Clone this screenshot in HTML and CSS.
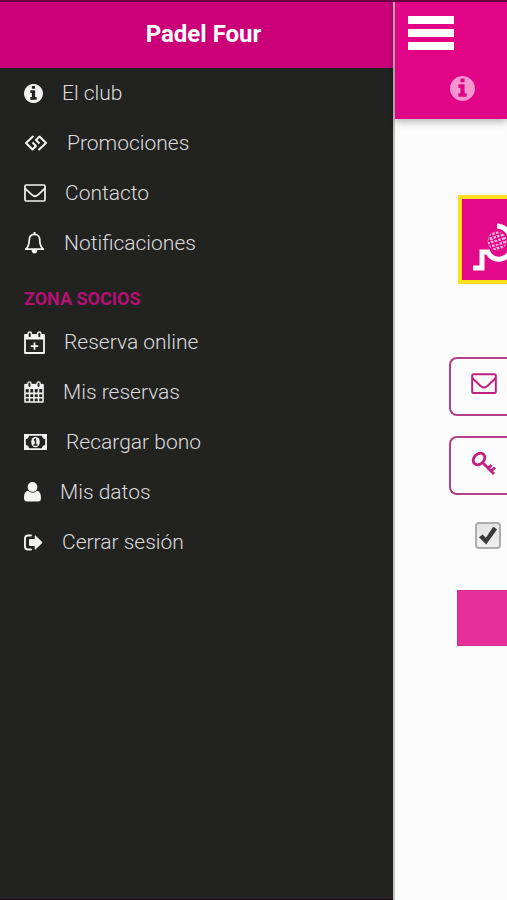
FILE: index.html
```
<!DOCTYPE html>
<html lang="es">
<head>
<meta charset="utf-8">
<meta name="viewport" content="width=device-width, initial-scale=1">
<title>Padel Four</title>
<link rel="stylesheet" href="styles.css">
</head>
<body>
<svg class="defs" aria-hidden="true">
  <symbol id="info" viewBox="128 128 1536 1536"><path fill="currentColor" d="M1152 1376v-160q0-14-9-23t-23-9h-96v-512q0-14-9-23t-23-9h-320q-14 0-23 9t-9 23v160q0 14 9 23t23 9h96v320h-96q-14 0-23 9t-9 23v160q0 14 9 23t23 9h448q14 0 23-9t9-23zm-128-896v-160q0-14-9-23t-23-9h-192q-14 0-23 9t-9 23v160q0 14 9 23t23 9h192q14 0 23-9t9-23zm640 416q0 209-103 385.500t-279.500 279.500-385.500 103-385.500-103-279.500-279.500-103-385.500 103-385.500 279.500-279.500 385.500-103 385.500 103 279.500 279.500 103 385.500z"/></symbol>
  <symbol id="mail" viewBox="0 0 22 18"><g fill="none" stroke="currentColor" stroke-width="1.700" stroke-linejoin="round"><rect x="1" y="1" width="20" height="16" rx="1.200"/><path d="M1 4C3 6.500 6 9 8.500 11.200Q11 13.300 13.500 11.200C16 9 19 6.500 21 4"/></g></symbol>
</svg>
<div class="app">
  <aside class="drawer">
    <header class="drawer-head"><h1>Padel Four</h1></header>
    <nav>
      <ul class="menu">
        <li><a href="#"><svg class="i19" viewBox="0 0 19 19"><use href="#info"/></svg>El club</a></li>
        <li><a href="#"><svg class="i24" viewBox="0 0 24 18"><g fill="none" stroke="currentColor" stroke-width="2" stroke-linejoin="round"><path d="M9.500 2 2 9l6.500 6.500L12 12 8.500 8.500"/><path d="M14.500 16 22 9l-6.500-6.500L12 6l3.500 3.500"/></g></svg>Promociones</a></li>
        <li><a href="#"><svg class="i22" viewBox="0 0 22 18"><use href="#mail"/></svg>Contacto</a></li>
        <li><a href="#"><svg class="i21" viewBox="0 0 22 23"><path fill="none" stroke="currentColor" stroke-width="1.800" stroke-linejoin="round" d="M11 2.500C7.500 2.500 5.500 5 5.500 8.500c0 4.500-1.300 7.500-3.700 9.500h18.400c-2.400-2-3.700-5-3.700-9.500 0-3.500-2-6-5.500-6z"/><path fill="currentColor" d="M10 0h2v3h-2zM8 18.500h6a3 4 0 0 1-6 0z"/></svg>Notificaciones</a></li>
      </ul>
      <h2>ZONA SOCIOS</h2>
      <ul class="menu">
        <li><a href="#"><svg class="i21" viewBox="0 0 21 23"><path fill="none" stroke="currentColor" stroke-width="1.800" stroke-linejoin="round" d="M1 4h19v18H1z"/><path fill="currentColor" d="M1 3h19v5.500H1z"/><g fill="#222221" stroke="currentColor" stroke-width="1.400"><rect x="4" y="1" width="3.400" height="6" rx="1.700"/><rect x="13.600" y="1" width="3.400" height="6" rx="1.700"/></g><path fill="currentColor" d="M9.600 11.500h1.800v2.700h2.800V16h-2.800v2.700H9.600V16H6.800v-1.800h2.800z"/></svg>Reserva online</a></li>
        <li><a href="#"><svg class="i20" viewBox="0 0 21 23"><path fill="currentColor" d="M1 3h19v5.500H1z"/><path fill="none" stroke="currentColor" stroke-width="1.600" stroke-linejoin="round" d="M1 4h19v18H1zM5.800 8v14M10.500 8v14M15.200 8v14M1 13h19M1 17.500h19"/><g fill="#222221" stroke="currentColor" stroke-width="1.400"><rect x="4" y="1" width="3.400" height="6" rx="1.700"/><rect x="13.600" y="1" width="3.400" height="6" rx="1.700"/></g></svg>Mis reservas</a></li>
        <li><a href="#"><svg class="i23" viewBox="0 0 23 16"><path fill="currentColor" fill-rule="evenodd" d="M0 0h23v16H0zM5 1.800A3.500 3.500 0 0 1 1.800 5v6A3.500 3.500 0 0 1 5 14.200h13A3.500 3.500 0 0 1 21.200 11V5A3.500 3.500 0 0 1 18 1.800z"/><ellipse cx="11.500" cy="8" rx="4.300" ry="5.200" fill="currentColor"/><path fill="none" stroke="#222221" stroke-width="1.400" d="M9.800 6.200 11.500 5v5.500M9.500 11h4"/></svg>Recargar bono</a></li>
        <li><a href="#"><svg class="i17" viewBox="0 0 17 20"><circle cx="8.500" cy="5" r="4.900" fill="currentColor"/><path fill="currentColor" d="M4.200 8.800Q8.500 12.500 12.800 8.800C16 9 17 12.500 17 16q0 3.500-3 3.500H3q-3 0-3-3.500C0 12.500 1 9 4.200 8.800z"/></svg>Mis datos</a></li>
        <li><a href="#"><svg class="i19" viewBox="0 0 19 17"><path fill="none" stroke="currentColor" stroke-width="1.900" stroke-linecap="round" d="M7 1.500H4Q1 1.500 1 4.500v8q0 3 3 3h3"/><path fill="currentColor" stroke="currentColor" stroke-linejoin="round" d="M5.500 5.500h5.700V1.800L18.200 8.500l-7 6.700v-3.700H5.500z"/></svg>Cerrar sesión</a></li>
      </ul>
    </nav>
  </aside>
  <main class="page">
    <header class="page-head">
      <button class="burger" type="button" aria-label="Menú"><span></span><span></span><span></span></button>
      <a class="tab" href="#" aria-label="El club"><svg viewBox="0 0 19 19"><use href="#info"/></svg></a>
    </header>
    <form class="login">
      <div class="logo"><svg viewBox="0 0 46 81" role="img" aria-label="Padel Four"><g fill="none" stroke="#fff" stroke-width="5"><path d="M11 69h9V53h6c2 6 9 8 13 7q5-1 8-5"/><path d="M35 27c5 0 9 3 12 7"/></g><clipPath id="ball"><circle cx="35" cy="42" r="9.500"/></clipPath><g clip-path="url(#ball)"><circle cx="35" cy="42" r="10" fill="#f9b4dc"/><path stroke="#e20a88" stroke-width="1.300" d="M20 36l30-9M20 40l30-9M20 44l30-9M20 48l30-9M20 52l30-9M20 56l30-9M20 60l30-9M24 30l9 28M28 30l9 28M32 30l9 28M36 30l9 28M20 30l9 28"/></g></svg></div>
      <div class="field"><label for="email" aria-label="Correo"><svg class="i26" viewBox="0 0 22 18"><use href="#mail"/></svg></label><input id="email" type="email"></div>
      <div class="field"><label for="pass" aria-label="Clave"><svg class="i26" viewBox="0 0 26 26"><g fill="none" stroke="currentColor" stroke-width="2.800"><ellipse cx="8" cy="7" rx="6.500" ry="5" transform="rotate(-45 8 7)"/><path d="M11.500 10.500 23 22M17.500 16l3-3M20.500 18.500l3.500-3"/></g></svg></label><input id="pass" type="password"></div>
      <input class="remember" type="checkbox" checked aria-label="Recordar">
      <button class="submit" type="submit" aria-label="Entrar"></button>
    </form>
  </main>
</div>
</body>
</html>
```

FILE: styles.css
```
* { box-sizing: border-box; }
body { margin: 0; font-family: Roboto, "Liberation Sans", sans-serif; background: #fcfcfc; }
.defs { position: absolute; width: 0; height: 0; }
.app { display: flex; min-height: 100vh; border-top: 2px solid #6b0340; }

.drawer { flex: 1; min-width: 0; background: #222221; border-bottom: 1px solid #1a0a14; }
.drawer-head { height: 66px; padding: 0 0 2px 14px; background: #cb0078; display: flex; align-items: center; justify-content: center; }
h1 { margin: 0; font-size: 24px; line-height: 32px; font-weight: 700; color: #fff; }
.menu { list-style: none; margin: 0; padding: 0 24px; }
.menu a { display: flex; align-items: center; gap: 19px; height: 50px; font-size: 21px; font-weight: 300; color: #dcdcdc; text-decoration: none; }
.menu svg { color: #f4f4f4; flex: none; }
h2 { margin: 0; padding: 19px 24px 6px; font-size: 18px; line-height: 24px; font-weight: 700; color: #b31173; }
svg { display: block; }
.i17 { width: 17px; }
.i19 { width: 19px; }
.i20 { width: 20px; }
.i21 { width: 21px; }
.i22 { width: 22px; }
.i23 { width: 23px; }
.i24 { width: 24px; }
.i26 { width: 26px; }

.page { flex: 0 0 114px; min-width: 0; background: #fcfcfc; border-left: 2px solid #c5bfc2; }
.page-head { height: 117px; padding: 14px 0 0 13px; background: #e20486; box-shadow: 0 2px 8px rgba(0, 0, 0, .35); }
.burger { display: grid; gap: 5px; width: 46px; padding: 0; border: 0; background: none; }
.burger span { height: 8px; background: #fff; }
.tab { display: block; width: 25px; margin: 26px 0 0 42px; color: #f596d0; }
.login { display: flex; flex-direction: column; padding-left: 54px; }
.logo { margin: 76px 0 73px 9px; border: 4px solid #ffe01a; border-right: 0; background: #e20a88; }
.logo svg { width: 46px; height: 81px; }
.field { display: flex; height: 59px; margin-bottom: 20px; padding-left: 20px; border: 2px solid #b5408a; border-right: 0; border-radius: 8px 0 0 8px; color: #c02080; }
.field label { padding-top: 14px; }
.field input { flex: 1; min-width: 0; width: 0; padding: 0; border: 0; background: none; outline: 0; }
.remember { appearance: none; display: grid; place-items: center; width: 26px; height: 27px; margin: 7px 0 41px 26px; border: 2px solid #adadad; border-radius: 4px; background: linear-gradient(#e4e4e4, #f0f0f0); }
.remember:checked::before { content: ""; width: 18px; height: 18px; background: #3a3a3a; clip-path: polygon(0 60%, 20% 45%, 38% 62%, 80% 0, 100% 16%, 40% 100%); }
.submit { height: 56px; margin-left: 8px; padding: 0; border: 1px solid #d32a8c; border-right: 0; background: #e53099; }
```
